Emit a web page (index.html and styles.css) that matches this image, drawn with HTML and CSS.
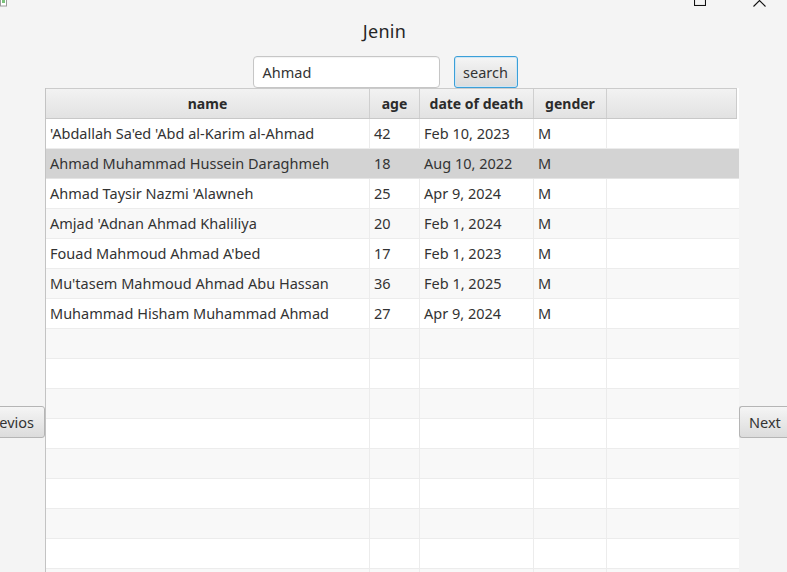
FILE: index.html
```html
<!DOCTYPE html>
<html>
<head>
<meta charset="utf-8">
<link rel="stylesheet" href="styles.css">
</head>
<body>
<div class="window">
  <div class="chrome">
    <svg class="app-icon" width="8" height="8" viewBox="0 0 8 8"><rect x="0.5" y="-4" width="6" height="10" fill="#fff" stroke="#9a9a9a"/><rect x="2" y="0" width="3" height="3" fill="#7ac27a"/></svg>
    <div class="controls">
      <svg class="max-icon" width="12" height="6" viewBox="0 0 12 6"><rect x="0.5" y="-6" width="11" height="11.5" fill="none" stroke="#111" stroke-width="1.1"/></svg>
      <svg class="close-icon" width="13" height="7" viewBox="0 0 13 7"><path d="M0.5 6.5 L6.5 0.5 L12.5 6.5" fill="none" stroke="#111" stroke-width="1.1"/></svg>
    </div>
  </div>
  <h1 class="title">Jenin</h1>
  <div class="searchbar">
    <div class="field">Ahmad</div>
    <button class="btn btn-focus">search</button>
  </div>
  <div class="main">
    <button class="btn nav prev">Previos</button>
    <div class="table">
      <div class="thead">
        <div class="th">name</div>
        <div class="th">age</div>
        <div class="th">date of death</div>
        <div class="th">gender</div>
        <div class="th filler"></div>
      </div>
      <div class="tbody">
        <div class="tr"><div class="td">'Abdallah Sa'ed 'Abd al-Karim al-Ahmad</div><div class="td">42</div><div class="td">Feb 10, 2023</div><div class="td">M</div><div class="td filler"></div></div>
        <div class="tr alt selected"><div class="td">Ahmad Muhammad Hussein Daraghmeh</div><div class="td">18</div><div class="td">Aug 10, 2022</div><div class="td">M</div><div class="td filler"></div></div>
        <div class="tr"><div class="td">Ahmad Taysir Nazmi 'Alawneh</div><div class="td">25</div><div class="td">Apr 9, 2024</div><div class="td">M</div><div class="td filler"></div></div>
        <div class="tr alt"><div class="td">Amjad 'Adnan Ahmad Khaliliya</div><div class="td">20</div><div class="td">Feb 1, 2024</div><div class="td">M</div><div class="td filler"></div></div>
        <div class="tr"><div class="td">Fouad Mahmoud Ahmad A'bed</div><div class="td">17</div><div class="td">Feb 1, 2023</div><div class="td">M</div><div class="td filler"></div></div>
        <div class="tr alt"><div class="td">Mu'tasem Mahmoud Ahmad Abu Hassan</div><div class="td">36</div><div class="td">Feb 1, 2025</div><div class="td">M</div><div class="td filler"></div></div>
        <div class="tr"><div class="td">Muhammad Hisham Muhammad Ahmad</div><div class="td">27</div><div class="td">Apr 9, 2024</div><div class="td">M</div><div class="td filler"></div></div>
        <div class="tr alt"><div class="td"></div><div class="td"></div><div class="td"></div><div class="td"></div><div class="td filler"></div></div>
        <div class="tr"><div class="td"></div><div class="td"></div><div class="td"></div><div class="td"></div><div class="td filler"></div></div>
        <div class="tr alt"><div class="td"></div><div class="td"></div><div class="td"></div><div class="td"></div><div class="td filler"></div></div>
        <div class="tr"><div class="td"></div><div class="td"></div><div class="td"></div><div class="td"></div><div class="td filler"></div></div>
        <div class="tr alt"><div class="td"></div><div class="td"></div><div class="td"></div><div class="td"></div><div class="td filler"></div></div>
        <div class="tr"><div class="td"></div><div class="td"></div><div class="td"></div><div class="td"></div><div class="td filler"></div></div>
        <div class="tr alt"><div class="td"></div><div class="td"></div><div class="td"></div><div class="td"></div><div class="td filler"></div></div>
        <div class="tr"><div class="td"></div><div class="td"></div><div class="td"></div><div class="td"></div><div class="td filler"></div></div>
        <div class="tr alt"><div class="td"></div><div class="td"></div><div class="td"></div><div class="td"></div><div class="td filler"></div></div>
        <div class="tr"><div class="td"></div><div class="td"></div><div class="td"></div><div class="td"></div><div class="td filler"></div></div>
        <div class="tr alt"><div class="td"></div><div class="td"></div><div class="td"></div><div class="td"></div><div class="td filler"></div></div>
        <div class="tr"><div class="td"></div><div class="td"></div><div class="td"></div><div class="td"></div><div class="td filler"></div></div>
        <div class="tr alt"><div class="td"></div><div class="td"></div><div class="td"></div><div class="td"></div><div class="td filler"></div></div>
        <div class="tr"><div class="td"></div><div class="td"></div><div class="td"></div><div class="td"></div><div class="td filler"></div></div>
      </div>
    </div>
    <button class="btn nav next">Next</button>
  </div>
</div>
</body>
</html>
```
FILE: styles.css
```css
html, body {
  margin: 0;
  padding: 0;
  background: #f4f4f4;
  overflow: hidden;
  height: 572px;
}
body {
  font-family: "Noto Sans", "Open Sans", sans-serif;
  color: #333333;
  font-size: 14.5px;
}
.window {
  display: flex;
  flex-direction: column;
  width: 787px;
}
.chrome {
  display: flex;
  justify-content: space-between;
  height: 8px;
}
.app-icon {
  display: block;
}
.controls {
  display: flex;
  gap: 47px;
  padding-right: 21px;
}
.max-icon {
  display: block;
}
.close-icon {
  display: block;
}
.title {
  margin: 12px 0 0 0;
  padding-right: 18px;
  font-weight: normal;
  font-size: 18px;
  line-height: 22px;
  text-align: center;
  color: #262626;
  letter-spacing: 0.3px;
}
.searchbar {
  display: flex;
  justify-content: center;
  gap: 14px;
  margin-top: 14px;
  padding-right: 17px;
  height: 32px;
}
.field {
  box-sizing: border-box;
  width: 187px;
  height: 32px;
  background: #ffffff;
  border: 1px solid #c6c6c6;
  border-radius: 4px;
  padding-left: 9px;
  line-height: 30px;
  box-shadow: inset 0 1px 1px rgba(0,0,0,0.05);
}
.btn {
  font-family: "Noto Sans", "Open Sans", sans-serif;
  font-size: 14.5px;
  color: #333333;
  background: linear-gradient(#f5f5f5, #dcdcdc);
  border: 1px solid #b5b5b5;
  border-radius: 3px;
  padding: 0 7px;
  height: 32px;
  line-height: 28px;
  box-sizing: border-box;
  cursor: pointer;
}
.btn-focus {
  width: 64px;
  border: 1px solid #3b9fd8;
  box-shadow: inset 0 0 0 1px #cfe6f4;
}
.main {
  display: flex;
  align-items: center;
  height: 668px;
}
.prev {
  width: 73px;
  margin-left: -28px;
  text-align: right;
  padding: 0 10px 0 0;
  white-space: nowrap;
}
.next {
  width: 48px;
  padding: 0 0 0 9px;
  text-align: left;
  border-right: none;
  border-radius: 3px 0 0 3px;
}
.nav {
  flex: none;
}
.table {
  width: 694px;
  align-self: stretch;
  border-left: 1px solid #c3c3c3;
  background: #ffffff;
  overflow: hidden;
  box-sizing: border-box;
}
.thead, .tr {
  display: grid;
  grid-template-columns: 324px 50px 114px 73px 1fr;
}
.thead {
  height: 31px;
  box-sizing: border-box;
  border-top: 1px solid #cbcbcb;
  border-bottom: 1px solid #c8c8c8;
  background: linear-gradient(#f2f2f2, #e2e2e2);
  margin-right: 2px;
}
.th {
  font-weight: bold;
  text-align: center;
  line-height: 29px;
  border-right: 1px solid #cfcfcf;
  color: #2b2b2b;
  font-size: 14px;
}
.th.filler {
  border-right: 1px solid #cccccc;
}
.tr {
  height: 30px;
  box-sizing: border-box;
  border-bottom: 1px solid #ececec;
  background: #ffffff;
}
.tr.alt {
  background: #f8f8f8;
}
.tr.selected {
  background: #d3d3d3;
  border-bottom-color: #e4e4e4;
}
.td {
  padding-left: 4px;
  line-height: 29px;
  border-right: 1px solid #ececec;
  white-space: nowrap;
  overflow: hidden;
}
.selected .td {
  border-right-color: #d3d3d3;
}
.td.filler {
  border-right: none;
}
```
